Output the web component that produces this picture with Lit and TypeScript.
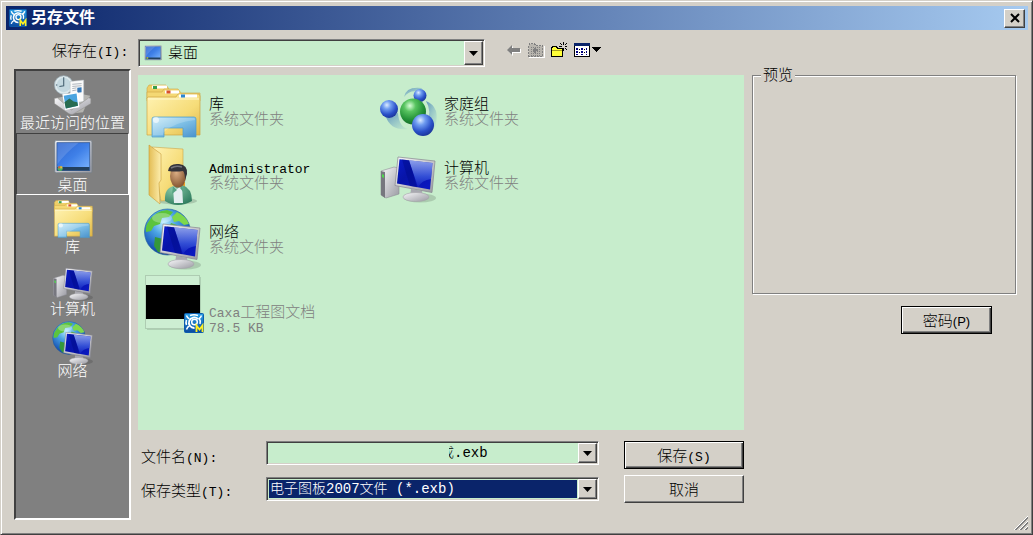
import { LitElement, html, svg, css, nothing } from "lit";
import { customElement, state } from "lit/decorators.js";
import { classMap } from "lit/directives/class-map.js";

/* Half-width runs are set in a monospaced face beside the full-width characters. */
const mixed = (text: string) =>
  text
    .split(/([\x20-\x7e]+)/)
    .filter((part) => part)
    .map((part) => (/^[\x20-\x7e]/.test(part) ? html`<span class="latin">${part}</span>` : part));

const paints = svg`<defs>
  <linearGradient id="folder" x1="0" y1="0" x2="1" y2="1"><stop offset="0" stop-color="#fff3b4"/><stop offset=".6" stop-color="#f6dc78"/><stop offset="1" stop-color="#dfb74a"/></linearGradient>
  <linearGradient id="folderSide" x1="0" y1="0" x2="1" y2="0"><stop offset="0" stop-color="#e3bd55"/><stop offset="1" stop-color="#fdeeae"/></linearGradient>
  <linearGradient id="stand" x1="0" y1="0" x2="1" y2="1"><stop offset="0" stop-color="#c9ecf9"/><stop offset=".5" stop-color="#7fc0e6"/><stop offset="1" stop-color="#4a92cc"/></linearGradient>
  <linearGradient id="screen" x1="0" y1="0" x2="1" y2=".8"><stop offset="0" stop-color="#0a1cc8"/><stop offset=".42" stop-color="#0714a8"/><stop offset="1" stop-color="#0a18c0"/></linearGradient>
  <linearGradient id="glare" x1="0" y1="0" x2="0" y2="1"><stop offset="0" stop-color="#b8ccff"/><stop offset=".6" stop-color="#4060e0"/><stop offset="1" stop-color="#1020c0"/></linearGradient>
  <linearGradient id="metal" x1="0" y1="0" x2="1" y2="1"><stop offset="0" stop-color="#f8f8fa"/><stop offset="1" stop-color="#9a9aa2"/></linearGradient>
  <linearGradient id="desk" x1="0" y1="0" x2="1" y2="1"><stop offset="0" stop-color="#2c63cf"/><stop offset=".5" stop-color="#3f80e8"/><stop offset="1" stop-color="#7db6ff"/></linearGradient>
  <radialGradient id="blueBall" cx=".38" cy=".28" r=".75"><stop offset="0" stop-color="#dcecff"/><stop offset=".3" stop-color="#6f9cf0"/><stop offset=".7" stop-color="#2a50c8"/><stop offset="1" stop-color="#1a3498"/></radialGradient>
  <radialGradient id="greenBall" cx=".38" cy=".28" r=".75"><stop offset="0" stop-color="#d8ffd8"/><stop offset=".3" stop-color="#58c460"/><stop offset=".7" stop-color="#249238"/><stop offset="1" stop-color="#156a28"/></radialGradient>
  <radialGradient id="ocean" cx=".42" cy=".3" r=".75"><stop offset="0" stop-color="#b8ecff"/><stop offset=".35" stop-color="#4ba4e4"/><stop offset=".75" stop-color="#1c5cba"/><stop offset="1" stop-color="#103c8c"/></radialGradient>
  <radialGradient id="skin" cx=".4" cy=".35" r=".7"><stop offset="0" stop-color="#dcae84"/><stop offset="1" stop-color="#80502c"/></radialGradient>
  <radialGradient id="coat" cx=".3" cy=".2" r=".9"><stop offset="0" stop-color="#86c8a6"/><stop offset="1" stop-color="#2c7a5c"/></radialGradient>
  <linearGradient id="badge" x1="0" y1="0" x2="0" y2="1"><stop offset="0" stop-color="#2aa0e4"/><stop offset="1" stop-color="#0a4aa0"/></linearGradient>
  <linearGradient id="swirl" x1="0" y1="0" x2="1" y2="1"><stop offset="0" stop-color="#3a74b8" stop-opacity=".75"/><stop offset="1" stop-color="#7ab4c8" stop-opacity=".1"/></linearGradient>
</defs>`;

const cog = svg`
  <rect x=".5" y=".5" width="19" height="19" rx="1" fill="url(#badge)" stroke="#0c5cae"/>
  <path d="M2.500 2.500q1 3 3 3.500M17.500 2.500q-1 3-3 3.500M2.500 16.500q1-3 3-3.500M6 2.500q4-1.500 8 0M2.500 7q-1 2.500 0 5" stroke="#fff" stroke-width="1.500" fill="none"/>
  <path d="M14 6A5.300 5.300 0 1 0 10.500 15" fill="none" stroke="#fff" stroke-width="1.800"/>
  <circle cx="10.500" cy="9" r="2.800" fill="none" stroke="#fff" stroke-width="1.500"/>
  <path d="M15 5q2 3 1 6" fill="none" stroke="#fff" stroke-width="1.500"/>
  <path d="M12.500 19v-6.500l3 4 3-4V19" stroke="#fff020" stroke-width="1.800" fill="none"/>`;

const monitor = (dy = 0) => svg`<g transform="translate(0 ${dy})">
  <ellipse cx="40" cy="51" rx="16" ry="4.500" fill="#000" opacity=".14"/>
  <path d="M31 42l11 2 1 6H30z" fill="#a8a8b0"/>
  <ellipse cx="36" cy="50" rx="13" ry="4.500" fill="url(#metal)" stroke="#a2a2a8" stroke-width=".6"/>
  <path d="M18 10l37 4-3 31.500-37-7z" fill="url(#metal)" stroke="#85858e" stroke-width=".7"/>
  <path d="M19.500 12.200l33 3.800-2.500 26.500-33-6z" fill="url(#screen)"/>
  <path d="M29 13.300l23.500 2.700-1.500 16Q42 33 38 40.300z" fill="url(#glare)" opacity=".75"/>
  <path d="M29 13.300l8 27 -7-1.300L22 12.500z" fill="#000c88" opacity=".45"/></g>`;

const art: Record<string, unknown> = {
  library: svg`
    <path d="M2 5l2-3h17l3 4v10H2z" fill="#efcf68" stroke="#cda543" stroke-width=".6"/>
    <path d="M7 2.500h15v3H7z" fill="#fff"/><path d="M8 3h4v3H8z" fill="#38a04a"/>
    <path d="M2 9h15l2-3h14l3 4h19v8H2z" fill="#f4d874" stroke="#cda543" stroke-width=".6"/>
    <path d="M20 7.500h14v3H20z" fill="#fff"/><path d="M21.500 7.500h4v3h-4z" fill="#d8502c"/>
    <path d="M3 14h28l2-3h21l1 2v39H2V15z" fill="url(#folder)" stroke="#cda543" stroke-width=".7"/>
    <path d="M34 11.500h18v3H34z" fill="#fff"/><path d="M36 11.500h4v3h-4z" fill="#2c86d0"/>
    <path d="M3 16h51" stroke="#fff8cc"/>
    <path d="M7 36q0-2 2-2h40q2 0 2 2v18H38v-9H19v9H7z" fill="url(#stand)" stroke="#4c9ccc" stroke-width=".7"/>
    <path d="M8 36q0-1 2-1h39q1 0 1 2-20 2-31 12l-1 3H8z" fill="#fff" opacity=".2"/>
    <circle cx="11" cy="37" r="3" fill="#fff" opacity=".6"/>`,
  admin: svg`
    <ellipse cx="32" cy="54" rx="20" ry="3.500" fill="#000" opacity=".15"/>
    <path d="M7 0l31 2v50l-22 2z" fill="url(#folder)" stroke="#caa54c" stroke-width=".6"/>
    <path d="M34 33h6v10h-6z" fill="#fff"/><path d="M37 35h3v6h-3z" fill="#e8a028"/>
    <path d="M4-2l12 9v26l-2 3 1 21L4 48z" fill="url(#folderSide)" stroke="#c79b38" stroke-width=".6"/>
    <path d="M20 54q-1-13 9-15l8-1q10 3 10 16-7 4-14 4t-13-4z" fill="url(#coat)"/>
    <path d="M28 39l4 3 5-4 1 18h-9z" fill="#e4eef0"/><path d="M28 39l-1 8 5-4zM37 38l2 8-4-5z" fill="#58a484"/>
    <ellipse cx="33" cy="29" rx="8" ry="11.500" fill="url(#skin)"/>
    <path d="M23 24q1-8 11-7 9 1 8 10l-2 6q0-7-2-9-7 1-15 0z" fill="#33333a"/>
    <path d="M26 21q5-3 11-1" stroke="#74747c" fill="none" stroke-width="1.500"/>`,
  homegroup: svg`
    <path d="M24 14Q26 3 42 5l-2 4Q30 6 24 14z" fill="url(#swirl)"/>
    <path d="M6 34q5 14 22 12-9-2-10-16z" fill="url(#swirl)"/>
    <path d="M46 18q15 6 9 26l-8-4q5-12-1-22z" fill="url(#swirl)"/>
    <circle cx="40" cy="12.500" r="6.500" fill="url(#blueBall)"/>
    <circle cx="9" cy="26" r="9" fill="url(#blueBall)"/>
    <circle cx="33" cy="28.500" r="13" fill="url(#greenBall)"/>
    <circle cx="43" cy="42" r="11" fill="url(#blueBall)"/>`,
  computer: svg`
    <path d="M1 24l13-4 5 1v26l-13 4-5-3z" fill="url(#metal)" stroke="#8e8e96" stroke-width=".6"/>
    <path d="M1 24l4 1v26l-4-3z" fill="#77777f"/><path d="M2 27l2 1v3l-2-1z" fill="#50d850"/>
    ${monitor()}`,
  network: svg`
    <circle cx="22.500" cy="21" r="23" fill="url(#ocean)" stroke="#1c5a9c" stroke-width=".6"/>
    <path d="M4 10Q10 0 22-1l6 2-4 5-7 1-2 6-6 2-3 5-5 1q-1-6 3-11z" fill="#5cc43c"/>
    <path d="M32 1q9 4 12 12l-5 1-5-4-5 1-2-5z" fill="#7ed84c"/>
    <path d="M10 26l8 2 4 6-4 8-5-1-4-6z" fill="#34983a"/>
    <path d="M26 12l6 2-2 4-6-2z" fill="#54b844"/>
    <ellipse cx="17" cy="7" rx="10" ry="5" fill="#fff" opacity=".28"/>
    ${monitor(3)}`,
  desktop: svg`
    <rect x="2.500" y="5" width="52" height="45" rx="2" fill="url(#metal)" stroke="#73808c"/>
    <rect x="5.500" y="8" width="46" height="39" fill="url(#desk)" stroke="#28508e"/>
    <path d="M6 8h30Q18 22 6 38z" fill="#fff" opacity=".14"/>
    <path d="M6 42h45v5H6z" fill="#22405e"/><circle cx="10" cy="44" r="3.500" fill="#4cb060"/><path d="M10 41h3v3h-3z" fill="#f0b83c"/><path d="M7.500 41H10v3H7.500z" fill="#e0603c"/>`,
  recent: svg`
    <circle cx="15" cy="14" r="13" fill="#dce8ec" stroke="#9cb0ba"/><circle cx="15" cy="14" r="10" fill="#c4d8e0"/>
    <path d="M15 5v10l-6 1M15 3v2M24 14h2M4 14h2" stroke="#456070" fill="none" stroke-width="1.500"/>
    <path d="M2 33l34-7 16 3-10 23-16 2z" fill="#b4b4b0"/>
    <path d="M24 9l19-2v30l-19 3z" fill="#fafafa" stroke="#b0b8c0" stroke-width=".7"/>
    <path d="M27 13l13-1M27 16l13-1M27 19l6-1M27 22l6-1" stroke="#9098a4"/><path d="M34 18l6-1v7l-6 1z" fill="#3478b8"/>
    <path d="M2 33l4-1 20 17 24-17 3 1v7L28 55q-3 1-6-1L2 40z" fill="url(#metal)" stroke="#8c8c88" stroke-width=".7"/>
    <path d="M13 27l22-3 2 21-20 4z" fill="#fff"/><path d="M15 29l18-3 2 17-17 4z" fill="#4aa4e0"/>
    <path d="M16 38l7-5 6 4 5 1 1 5-17 4z" fill="#286c50"/>`,
  document: svg`
    <path d="M2 2h54v53H2z" fill="#000" opacity=".12"/>
    <rect x=".5" y=".5" width="54" height="53" fill="#cdeed2" stroke="#aeccb2"/>
    <path d="M1 10h54v34H1z" fill="#000"/>
    <g transform="translate(39 38)">${cog}</g>`,
};

const icon = (name: string) =>
  html`<svg class="icon" viewBox="0 0 56 56" aria-hidden="true">${paints}${art[name]}</svg>`;

const caret = html`<svg class="caret" viewBox="0 0 9 5" aria-hidden="true"><path d="M0 0h9L4.500 5z" fill="#000"/></svg>`;

const places = [
  { icon: "recent", label: "最近访问的位置" },
  { icon: "desktop", label: "桌面" },
  { icon: "library", label: "库" },
  { icon: "computer", label: "计算机" },
  { icon: "network", label: "网络" },
];

const entries = [
  { icon: "library", name: "库", lines: ["系统文件夹"] },
  { icon: "homegroup", name: "家庭组", lines: ["系统文件夹"] },
  { icon: "admin", name: "Administrator", lines: ["系统文件夹"] },
  { icon: "computer", name: "计算机", lines: ["系统文件夹"] },
  { icon: "network", name: "网络", lines: ["系统文件夹"] },
  { icon: "document", name: "", lines: ["Caxa工程图文档", "78.5 KB"] },
];

@customElement("app-root")
export class AppRoot extends LitElement {
  @state() private place = 1;

  static styles = css`
    :host {
      display: block;
      font: 300 15px/15px "Noto Sans CJK SC", sans-serif;
      color: #000;
    }
    * { box-sizing: border-box; }
    button, input, select { font: inherit; color: inherit; margin: 0; border-radius: 0; }
    svg { display: block; overflow: visible; }
    .latin { font-family: "Liberation Mono", monospace; font-size: 13px; line-height: 0; white-space: pre; }
    .dialog {
      position: relative;
      display: flex;
      flex-direction: column;
      min-height: 100vh;
      padding: 4px;
      background: #d4d0c8;
      border: 1px solid;
      border-color: #d4d0c8 #404040 #404040 #d4d0c8;
      box-shadow: inset 1px 1px #fff, inset -1px -1px #808080;
    }
    .title {
      display: flex;
      align-items: center;
      gap: 4px;
      height: 24px;
      margin: 1px 0 0 1px;
      padding: 0 3px;
      color: #fff;
      background: linear-gradient(90deg, #0a246a, #a6caf0);
    }
    .title h1 { flex: 1; margin: 0; padding-bottom: 3px; font: inherit; font-size: 16px; font-weight: 700; }
    .logo { width: 18px; height: 18px; }
    .close { display: grid; place-items: center; width: 21px; height: 19px; }
    .close svg { width: 10px; height: 8px; }
    .btn, .close, .drop {
      padding: 0;
      background: #d4d0c8;
      border: 1px solid;
      border-color: #fff #404040 #404040 #fff;
      box-shadow: inset -1px -1px #808080;
    }
    .btn { height: 28px; padding-bottom: 2px; }
    .btn.default {
      border-color: #000;
      box-shadow: inset 1px 1px #fff, inset -1px -1px #404040, inset -2px -2px #808080;
    }
    .look {
      display: flex;
      margin: 9px 0 0 47px;
    }
    .look label { width: 86px; padding-top: 3px; }
    .combo {
      position: relative;
      display: flex;
      align-items: stretch;
      background: #c7edcc;
      border: 1px solid;
      border-color: #808080 #fff #fff #808080;
      box-shadow: inset 1px 1px #404040, inset -1px -1px #d4d0c8;
      padding: 1px;
      height: 24px;
    }
    .combo.tall { width: 347px; height: 28px; }
    .combo select, .combo input {
      appearance: none;
      flex: 1;
      min-width: 0;
      padding: 0;
      border: 0;
      outline: 0;
      background: transparent;
    }
    .combo.tall select { padding: 0 0 3px 28px; }
    .combo .picture { position: absolute; left: 5px; top: 4px; width: 18px; height: 18px; }
    .drop {
      display: grid;
      place-items: center;
      width: 19px;
      pointer-events: none;
    }
    .caret { width: 9px; height: 5px; }
    .tools { display: flex; gap: 7px; margin: 3px 0 0 20px; height: 16px; }
    .tools button { display: block; padding: 0; border: 0; background: none; height: 16px; }
    .tools svg { height: 16px; }
    .body {
      flex: 1;
      display: grid;
      grid-template-columns: 117px minmax(0, 1fr) 265px;
      padding: 0 11px 10px 9px;
    }
    .places {
      margin-top: 2px;
      background: #808080;
      border: 2px solid;
      border-color: #404040 #fff #fff #404040;
    }
    .place {
      display: flex;
      flex-direction: column;
      align-items: center;
      width: 100%;
      height: 62px;
      padding: 3px 0 0;
      color: #fff;
      line-height: 13px;
      background: none;
      border: 1px solid transparent;
      white-space: nowrap;
    }
    .place.on { border-color: #404040 #fff #fff #404040; }
    .place .icon { width: 40px; height: 40px; }
    .main { display: flex; flex-direction: column; gap: 11px; padding: 8px 8px 17px 7px; }
    .files {
      flex: 1;
      display: grid;
      grid-template-columns: 235px 235px;
      grid-auto-rows: 64px;
      align-content: start;
      margin: 0;
      padding: 4px 7px;
      list-style: none;
      background: #c7edcc;
    }
    .files .nameless { grid-column: 1; }
    .file {
      display: flex;
      align-items: center;
      gap: 8px;
      width: 100%;
      height: 64px;
      padding: 0;
      text-align: left;
      background: none;
      border: 0;
    }
    .file .icon { width: 56px; height: 56px; }
    .text { padding-bottom: 2px; }
    .nameless .text { align-self: flex-end; }
    .name, .line { display: block; }
    .line { color: #808080; }
    .form {
      display: grid;
      grid-template-columns: 128px minmax(0, 1fr) 120px;
      grid-auto-rows: 28px;
      row-gap: 6px;
      align-items: center;
    }
    .form label { padding-left: 3px; }
    .form .combo { margin-right: 25px; }
    .form .first { align-self: start; }
    .blank { flex: 0 0 181px; }
    .filename, .kind { font-family: "Liberation Mono", "Noto Sans CJK SC", monospace; font-size: 14px; }
    .combo .filename { text-indent: -9px; }
    .combo .kind { margin: 1px 1px 1px 1px; padding-left: 1px; color: #fff; background: #0a246a; }
    .side { display: flex; flex-direction: column; gap: 12px; }
    .preview {
      height: 228px;
      margin: -1px 1px 0 0;
      padding: 0;
      border: 1px solid #808080;
      box-shadow: 1px 1px #fff, inset 1px 1px #fff;
    }
    .preview legend { margin-left: 8px; padding: 0 2px 3px; background: #d4d0c8; }
    .password { width: 91px; align-self: flex-end; margin-right: 25px; }
    .ui { font-family: "Liberation Sans", sans-serif; font-size: 13px; line-height: 0; }
    .grip { position: absolute; right: 4px; bottom: 4px; width: 14px; height: 14px; }
  `;

  render() {
    return html`<div class="dialog">
      <header class="title">
        <svg class="logo" viewBox="0 0 20 20" aria-hidden="true">${paints}${cog}</svg>
        <h1>另存文件</h1>
        <button class="close" aria-label="关闭">
          <svg viewBox="0 0 10 8" aria-hidden="true"><path d="M1 0l8 8M9 0L1 8" stroke="#000" stroke-width="2"/></svg>
        </button>
      </header>

      <div class="look">
        <label for="look">${mixed("保存在(I):")}</label>
        <div class="combo tall">
          <svg class="picture" viewBox="0 0 56 56" aria-hidden="true">${paints}${art.desktop}</svg>
          <select id="look"><option>桌面</option></select>
          <span class="drop">${caret}</span>
        </div>
        <div class="tools">
          <button aria-label="后退"><svg width="16" viewBox="0 0 16 16">
            <path d="M3 9l5-5v3h8v4H8v3z" fill="#fff"/><path d="M2 8l5-5v3h8v4H7v3z" fill="#808080"/></svg></button>
          <button aria-label="向上一级"><svg width="16" viewBox="0 0 16 16" shape-rendering="crispEdges">
            <path d="M1 15h15V4" stroke="#fff" fill="none"/>
            <path d="M.500 14.500v-11l1-2h5l1 2h7v11z" fill="#b8b5ae" stroke="#808080" stroke-dasharray="2 1"/>
            <path d="M3 5h10M3 7h10M3 9h10M3 11h10M3 13h10" stroke="#808080" stroke-dasharray="1 1"/>
            <path d="M7 6v5M5 8h5" stroke="#808080" stroke-width="2"/></svg></button>
          <button aria-label="新建文件夹"><svg width="16" viewBox="0 0 16 16" shape-rendering="crispEdges">
            <path d="M.500 14.500v-8l1-2h4l1 2h5v8z" fill="#ffff38" stroke="#000"/><path d="M1 8h10" stroke="#a8a020"/>
            <path d="M12.500 0v3M12.500 6v3M8 4.500h3M14 4.500h2M9 1l2 2M16 1l-2 2M16 8l-2-2" stroke="#000"/></svg></button>
          <button aria-label="查看"><svg width="28" viewBox="0 0 28 16" shape-rendering="crispEdges">
            <path d="M.500 1.500h15v13H.500z" fill="#fff" stroke="#000"/><path d="M0 1h16v3H0z" fill="#0a246a"/>
            <path d="M2 6h2v2H2zM7 6h2v2H7zM12 6h1v2h-1zM2 9h2v2H2zM7 9h2v2H7zM12 9h1v2h-1zM2 12h2v1H2zM7 12h2v1H7zM12 12h1v1h-1z" fill="#000080"/>
            <path d="M4.500 7h1M9.500 7h1M4.500 10h1M9.500 10h1" stroke="#000"/>
            <path d="M18 5h9l-4.500 5z" fill="#000"/></svg></button>
        </div>
      </div>

      <div class="body">
        <nav class="places">
          ${places.map(
            (p, i) => html`<button
              class=${classMap({ place: true, on: i === this.place })}
              @click=${() => (this.place = i)}
            >${icon(p.icon)}<span>${p.label}</span></button>`
          )}
        </nav>

        <main class="main">
          <ul class="files">
            ${entries.map(
              (e) => html`<li class=${classMap({ nameless: !e.name })}>
                <button class="file">
                  ${icon(e.icon)}
                  <span class="text">
                    ${e.name ? html`<span class="name">${mixed(e.name)}</span>` : nothing}
                    ${e.lines.map((l) => html`<span class="line">${mixed(l)}</span>`)}
                  </span>
                </button>
              </li>`
            )}
          </ul>
          <div class="form">
            <label for="filename">${mixed("文件名(N):")}</label>
            <div class="combo first">
              <span class="blank"></span>
              <input id="filename" class="filename" type="text" .value=${"成.exb"} />
              <span class="drop">${caret}</span>
            </div>
            <button class="btn default">${mixed("保存(S)")}</button>
            <label for="kind">${mixed("保存类型(T):")}</label>
            <div class="combo">
              <select id="kind" class="kind"><option>电子图板2007文件 (*.exb)</option></select>
              <span class="drop">${caret}</span>
            </div>
            <button class="btn">取消</button>
          </div>
        </main>

        <aside class="side">
          <fieldset class="preview"><legend>预览</legend></fieldset>
          <button class="btn default password">密码<span class="ui">(P)</span></button>
        </aside>
      </div>
      <svg class="grip" viewBox="0 0 14 14" aria-hidden="true">
        <path d="M0 14L14 0M5 14l9-9M10 14l4-4" stroke="#fff"/>
        <path d="M1 14L14 1M2 14L14 2M6 14l8-8M7 14l7-7M11 14l3-3M12 14l2-2" stroke="#808080"/>
      </svg>
    </div>`;
  }
}
